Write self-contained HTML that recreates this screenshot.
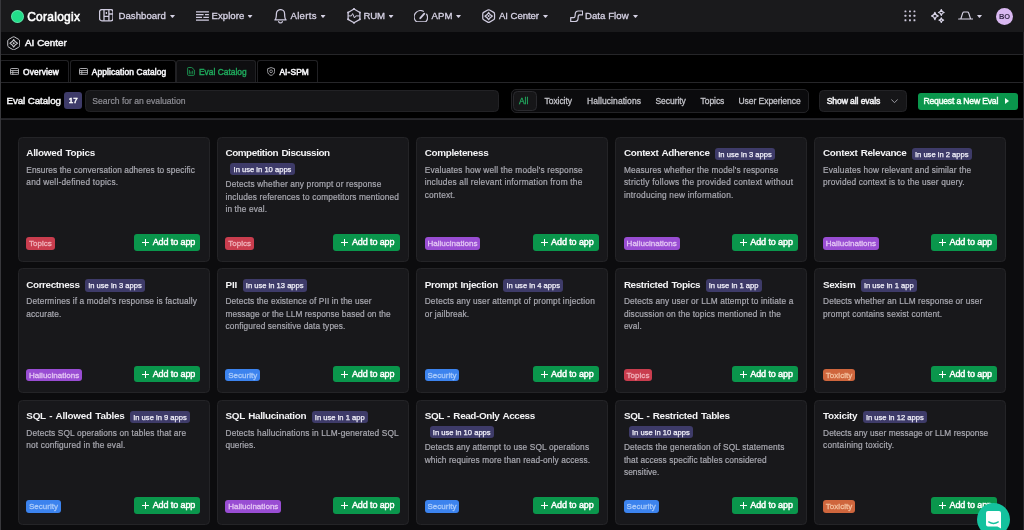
<!DOCTYPE html>
<html lang="en">
<head>
<meta charset="utf-8">
<title>Coralogix - AI Center - Eval Catalog</title>
<style>
*{box-sizing:border-box;margin:0;padding:0}
html,body{width:1024px;height:530px;overflow:hidden;background:#0d0d0f;color:#fff;
  font-family:"Liberation Sans",sans-serif;-webkit-font-smoothing:antialiased}
body{position:relative}
#nav,#sub,#tabs,#bar,#cards,#chat{will-change:transform}
/* top nav */
#nav{position:absolute;left:0;top:0;width:1024px;height:32px;background:#1a1a1c}
#nav .t{position:absolute;top:8.700px;height:14px;line-height:14px;font-size:9.600px;color:#d6d2e4;white-space:nowrap;letter-spacing:0.05px;-webkit-text-stroke:0.3px #d6d2e4}
#nav svg{position:absolute}
#nav .car{position:absolute;top:14.800px;width:5px;height:3px;background:#d6d2e4;clip-path:polygon(0 8%,8% 0,92% 0,100% 8%,58% 100%,42% 100%)}
#logo{position:absolute;left:11px;top:9.5px;width:13px;height:13px;border-radius:50%;background:#22dd8a;box-shadow:inset 0 0 0 1px rgba(255,255,255,.28)}
#brand{position:absolute;left:27.200px;top:8.700px;height:16px;line-height:16px;font-size:12px;font-weight:normal;color:#fff;letter-spacing:0.26px;-webkit-text-stroke:0.55px #fff}
#avatar{position:absolute;left:996px;top:7.5px;width:17px;height:17px;border-radius:50%;background:#d9b8f1;color:#3a2d4d;font-size:7.500px;font-weight:bold;text-align:center;line-height:17.500px;letter-spacing:-0.2px}
/* sub header */
#sub{position:absolute;left:0;top:32px;width:1024px;height:23px;background:#0a0a0c;border-bottom:1px solid #262629}
#sub .t{position:absolute;left:25px;top:4.2px;height:14px;line-height:14px;font-size:9.8px;color:#f0f0f3;letter-spacing:0.05px;-webkit-text-stroke:0.55px #f0f0f3;white-space:nowrap}
#sub svg{position:absolute}
/* tabs */
#tabs{position:absolute;left:0;top:55px;width:1024px;height:28px;background:#000;border-bottom:1px solid #262629}
.tab{position:absolute;top:5px;height:22px;border:1px solid #212124;border-bottom:none;border-radius:3px 3px 0 0;background:#000}
.tab .t{position:absolute;top:3.800px;height:14px;line-height:14px;font-size:8.4px;color:#f2f2f5;white-space:nowrap;letter-spacing:0.12px;-webkit-text-stroke:0.55px #f2f2f5}
.tab svg{position:absolute}
.tab.on{background:#0e0e10}
.tab.on .t{color:#1faa5c;-webkit-text-stroke:0.4px #1faa5c}
/* toolbar */
#bar{position:absolute;left:0;top:83px;width:1024px;height:37px;background:#000;border-bottom:1px solid #27272b}
#bar:after{content:"";position:absolute;left:0;top:35px;width:1024px;height:1px;background:#222226}
#bar .ttl{position:absolute;left:6.5px;top:10.800px;height:14px;line-height:14px;font-size:9.800px;color:#f4f4f6;letter-spacing:-0.1px;white-space:nowrap;-webkit-text-stroke:0.45px #f4f4f6}
#cnt{position:absolute;left:64.300px;top:9.300px;width:17.700px;height:17.200px;border-radius:3px;background:#3e3b69;color:#fff;font-size:8px;text-align:center;line-height:17.200px;letter-spacing:0;-webkit-text-stroke:0.5px #fff}
#search{position:absolute;left:84.500px;top:7px;width:414.300px;height:21.700px;border-radius:4.500px;background:#161618;border:1px solid #222225}
#search span{position:absolute;left:6.800px;top:4.200px;height:13px;line-height:13px;font-size:8.600px;color:#8f8f96;letter-spacing:0;white-space:nowrap;-webkit-text-stroke:0.2px #8f8f96}
#filters{position:absolute;left:510.500px;top:6px;width:298px;height:23.500px;border-radius:5px;background:#0b0b0d;border:1px solid #232326}
#filters .f{position:absolute;top:4.700px;height:13px;line-height:13px;font-size:8.500px;color:#c2c2c8;white-space:nowrap;letter-spacing:-0.05px;-webkit-text-stroke:0.3px #c2c2c8}
#fall{position:absolute;left:1.500px;top:1px;width:23.500px;height:19.500px;border-radius:4.500px;background:#161618;border:1px solid #2a2a2e}
#fall span{position:absolute;left:5px;top:2.700px;height:13px;line-height:13px;font-size:8.500px;color:#22a85e;letter-spacing:-0.05px;-webkit-text-stroke:0.3px #22a85e}
#dd{position:absolute;left:819.200px;top:7px;width:87.500px;height:21.500px;border-radius:4.500px;background:#161618;border:1px solid #232326}
#dd span{position:absolute;left:6.500px;top:3.900px;height:13px;line-height:13px;font-size:8.600px;color:#f0f0f3;letter-spacing:-0.1px;white-space:nowrap;-webkit-text-stroke:0.5px #f0f0f3}
#dd svg{position:absolute;left:70.500px;top:8px}
#req{position:absolute;left:917.700px;top:9.600px;width:100.300px;height:17.200px;border-radius:3px;background:#0a964c}
#req span{position:absolute;left:5.700px;top:2.500px;height:13px;line-height:13px;font-size:8.600px;color:#f2fff6;letter-spacing:-0.17px;white-space:nowrap;-webkit-text-stroke:0.5px #f2fff6}
#req i{position:absolute;left:87.300px;top:5.500px;width:0;height:0;border-top:3.100px solid transparent;border-bottom:3.100px solid transparent;border-left:4.200px solid #f2fff6}
/* content */
#content{position:absolute;left:0;top:120px;width:1024px;height:410px;background:#0c0c0e}
#edgeL{position:absolute;left:0;top:0;width:1px;height:530px;background:#38383c}
#edgeR{position:absolute;left:1023px;top:32px;width:1px;height:498px;background:#242428}
.card{position:absolute;width:192px;height:124.700px;border-radius:4.500px;background:#18181b;border:1px solid #242427}
.card .hd{position:absolute;left:7.800px;top:7.300px;width:176px;display:flex;flex-wrap:wrap;align-items:flex-start}
.card h3{height:15px;line-height:15px;font-size:9.900px;font-weight:bold;color:#f4f4f6;white-space:nowrap;letter-spacing:-0.3px;word-spacing:1px}
.card .bdg{height:12.800px;line-height:13.200px;margin-left:5.500px;margin-top:2.300px;padding:0 3.100px;border-radius:3px;background:#3e3b69;color:#f3f2fb;font-size:7.600px;white-space:nowrap;letter-spacing:0;-webkit-text-stroke:0.25px #f3f2fb}
.card.w .hd{width:150px}
.card.w .bdg{margin-left:5px;margin-top:2.300px}
.card p{position:absolute;left:7.800px;top:25.600px;font-size:8.300px;line-height:12.500px;color:#a9a9b1;white-space:nowrap;letter-spacing:0.09px;-webkit-text-stroke:0.2px #a9a9b1}
.card.w p{top:40.400px}
.card p span{display:block}
.tag{position:absolute;left:7.700px;top:99.400px;height:12.600px;line-height:13.400px;padding:0 2.800px;border-radius:3px;font-size:8px;white-space:nowrap;letter-spacing:0.03px;-webkit-text-stroke:0.3px}
.tag.tp{background:#c93d4e;color:#f0b1ba}
.tag.hl{background:#994dd3;color:#e3c4f4}
.tag.sc{background:#3c83ee;color:#a9cafa}
.tag.tx{background:#cf663d;color:#f4c2a0}
.add{position:absolute;left:115.700px;top:96.200px;width:66.200px;height:16.800px;border-radius:3px;background:#0a964c;color:#fff;font-size:9px;font-weight:normal;white-space:nowrap;letter-spacing:-0.1px;line-height:16.500px;-webkit-text-stroke:0.45px #fff}
.add span{position:absolute;left:18.500px;top:0.200px}
.add i{position:absolute;left:8px;top:5px;width:7px;height:7px}
.add i:before{content:"";position:absolute;left:3px;top:0;width:1px;height:7px;background:#fff}
.add i:after{content:"";position:absolute;left:0;top:3px;width:7px;height:1px;background:#fff}
#chat{position:absolute;left:976.800px;top:503px;width:33.400px;height:33.400px;border-radius:50%;background:#14c29e}
#chat svg{position:absolute;left:9px;top:8px}
</style>
</head>
<body>
<div id="content"></div>
<div id="nav">
  <div id="logo"></div><div id="brand">Coralogix</div>
  <div class="t" style="left:118.5px">Dashboard</div><div class="car" style="left:170px"></div>
  <div class="t" style="left:211.5px">Explore</div><div class="car" style="left:247.5px"></div>
  <div class="t" style="left:290.5px;letter-spacing:0.28px">Alerts</div><div class="car" style="left:320.5px"></div>
  <div class="t" style="left:363.5px;letter-spacing:-0.2px">RUM</div><div class="car" style="left:388.5px"></div>
  <div class="t" style="left:431.5px">APM</div><div class="car" style="left:456px"></div>
  <div class="t" style="left:499px;letter-spacing:-0.07px">AI Center</div><div class="car" style="left:543px"></div>
  <div class="t" style="left:585px">Data Flow</div><div class="car" style="left:633px"></div>
  <div class="car" style="left:977px"></div>

  <svg style="left:98.6px;top:9.4px" width="14.6" height="12.4" viewBox="0 0 14.6 12.4" fill="none" stroke="#cfcbdf" stroke-width="1.300"><rect x=".6" y=".6" width="13.4" height="11.2" rx="2.2"/><path d="M5 .6v11.2M9.9 .6v11.2M5 7.4h4.9M9.9 5h4.1M7.4 3v2"/></svg>
  <svg style="left:196.2px;top:11px" width="12.9" height="10" viewBox="0 0 12.9 10" fill="none" stroke="#cfcbdf" stroke-width="1.250"><path d="M0 .8h12.9M0 3.6h7.6M9 3.6h3.9M0 6.4h6M7.4 6.4h5.5M0 9.2h12.9"/></svg>
  <svg style="left:274px;top:8.600px" width="13" height="15" viewBox="0 0 13 15" fill="none" stroke="#cfcbdf" stroke-width="1.250" stroke-linejoin="round" stroke-linecap="round"><path d="M.9 10.900c1.300-1 1.500-2.800 1.500-6.200a4.100 4.100 0 0 1 8.200 0c0 3.400.2 5.200 1.500 6.200z"/><path d="M4.700 12.700a1.900 1.900 0 0 0 3.600 0"/></svg>
  <svg style="left:346.7px;top:8.2px" width="14" height="15.800" viewBox="0 0 14 15.800" fill="none" stroke="#cfcbdf" stroke-width="1.250" stroke-linejoin="round"><path d="M7 1l5.900 3.450v6.900L7 14.800 1.100 11.350v-6.900z"/><path d="M1.100 7.900h3.300l1.200-2.300 1.900 4.400 1.200-2.100h4.200" stroke-width="1"/><g fill="#cfcbdf" stroke="none"><circle cx="7" cy="1" r="1"/><circle cx="7" cy="14.800" r="1"/><circle cx="1.100" cy="4.450" r="1"/><circle cx="12.900" cy="4.450" r="1"/><circle cx="1.100" cy="11.350" r="1"/><circle cx="12.900" cy="11.350" r="1"/></g></svg>
  <svg style="left:414.300px;top:9.800px" width="14.200" height="12.600" viewBox="0 0 14.200 12.600" fill="none" stroke="#cfcbdf" stroke-width="1.250" stroke-linecap="round" stroke-linejoin="round"><path d="M9.400 1.300A6.300 6.300 0 0 0 1.900 11.200a1.300 1.300 0 0 0 1 .6h8.400a1.300 1.300 0 0 0 1-.6A6.300 6.300 0 0 0 12.600 4.200"/><path d="M6.300 8.200L10.300 3.700" stroke-width="1.900"/></svg>
  <svg style="left:482.400px;top:8.900px" width="13.300" height="14.200" viewBox="0 0 13.300 14.200" fill="none" stroke="#cfcbdf" stroke-width="1.250" stroke-linejoin="round"><path d="M5.750 1.050a1.800 1.800 0 0 1 1.800 0l4.100 2.350a1.800 1.800 0 0 1 .9 1.550v4.300a1.800 1.800 0 0 1-.9 1.550l-4.100 2.350a1.800 1.800 0 0 1-1.800 0l-4.100-2.350a1.800 1.800 0 0 1-.9-1.550v-4.300a1.800 1.800 0 0 1 .9-1.550z"/><path d="M6.650 3.400q1.200 2.500 3.700 3.700q-2.500 1.200-3.700 3.700q-1.200-2.500-3.700-3.700q2.500-1.200 3.700-3.700z" stroke-width="1.200"/><circle cx="6.650" cy="7.100" r="1" fill="#cfcbdf" stroke="none"/></svg>
  <svg style="left:569.600px;top:9.600px" width="13.300" height="12.300" viewBox="0 0 13.300 12.300" fill="none" stroke="#cfcbdf" stroke-width="1.250" stroke-linejoin="round"><path d="M.7 11.600V7.700h3.100c1.200 0 1.400-1.300 1.400-3.100C5.200 2.300 6.400 1 8.500 1h4.100v3.900H9.500c-1.200 0-1.400 1.300-1.400 3.100 0 2.300-1.200 3.600-3.300 3.600z" stroke-width="1.200"/></svg>
  <svg style="left:904px;top:10.400px" width="12.200" height="11.800" viewBox="0 0 12.200 11.800" fill="#cdc9dc"><rect x=".5" y=".4" width="1.900" height="1.900" rx=".5"/><rect x="5" y=".4" width="1.900" height="1.900" rx=".5"/><rect x="9.500" y=".4" width="1.900" height="1.900" rx=".5"/><rect x=".5" y="4.850" width="1.900" height="1.900" rx=".5"/><rect x="5" y="4.850" width="1.900" height="1.900" rx=".5"/><rect x="9.500" y="4.850" width="1.900" height="1.900" rx=".5"/><rect x=".5" y="9.300" width="1.900" height="1.900" rx=".5"/><rect x="5" y="9.300" width="1.900" height="1.900" rx=".5"/><rect x="9.500" y="9.300" width="1.900" height="1.900" rx=".5"/></svg>
  <svg style="left:930.800px;top:9px" width="13.800" height="14" viewBox="0 0 13.800 14" fill="none" stroke="#d9d5e8" stroke-width="1.250" stroke-linejoin="round"><path d="M3.900 3.400q.55 3.050 3.500 3.600q-2.950.55-3.500 3.600q-.55-3.050-3.500-3.600q2.950-.55 3.500-3.600z"/><path d="M10.300.6q.45 2.450 2.900 2.900q-2.450.45-2.900 2.900q-.45-2.450-2.900-2.900q2.450-.45 2.900-2.900z"/><path d="M10.300 8.900q.35 1.950 2.300 2.300q-1.950.35-2.300 2.300q-.35-1.950-2.300-2.300q1.950-.35 2.300-2.300z"/></svg>
  <svg style="left:957.800px;top:11.200px" width="15.400" height="8.800" viewBox="0 0 15.400 8.800" fill="none" stroke="#d9d5e8" stroke-width="1.100" stroke-linecap="round" stroke-linejoin="round"><path d="M.6 8h14.200M2.800 8L4.700 2c.2-.7.600-1 1.300-1h3.400c.7 0 1.100.3 1.300 1L12.600 8"/></svg>
  <div id="avatar">BO</div>
</div>
<div id="sub"><svg style="left:6.800px;top:3.900px" width="13.400" height="14.600" viewBox="0 0 13.400 14.600" fill="none" stroke="#c6c6cb" stroke-width="1" stroke-linejoin="round"><path d="M5.800 1.050a1.800 1.800 0 0 1 1.800 0l4.150 2.400a1.800 1.800 0 0 1 .9 1.550v4.600a1.800 1.800 0 0 1-.9 1.550l-4.150 2.400a1.800 1.800 0 0 1-1.800 0l-4.150-2.400a1.800 1.800 0 0 1-.9-1.550v-4.600a1.800 1.800 0 0 1 .9-1.550z"/><path d="M6.700 3.500q1.200 2.600 3.800 3.800q-2.600 1.200-3.800 3.800q-1.200-2.600-3.800-3.800q2.600-1.200 3.800-3.800z" stroke-width="1.100"/><circle cx="6.700" cy="7.300" r="1" fill="#c6c6cb" stroke="none"/></svg><div class="t">AI Center</div></div>
<div id="tabs">
  <div class="tab" style="left:-1px;width:69.500px"><svg style="left:10.2px;top:7.100px" width="9" height="7.200" viewBox="0 0 9 7.200" fill="none" stroke="#bdbdc2" stroke-width=".9"><rect x=".5" y=".5" width="8" height="6.200" rx=".8"/><path d="M.5 2.600h8M.5 4.650h8M2.800 2.600v4.100"/></svg><div class="t" style="left:23px">Overview</div></div>
  <div class="tab" style="left:69.500px;width:106px"><svg style="left:8.3px;top:7.100px" width="9" height="7.200" viewBox="0 0 9 7.200" fill="none" stroke="#bdbdc2" stroke-width=".9"><rect x=".5" y=".5" width="8" height="6.200" rx=".8"/><path d="M.5 2.600h8M.5 4.650h8M2.800 2.600v4.100"/></svg><div class="t" style="left:21.300px">Application Catalog</div></div>
  <div class="tab on" style="left:176.300px;width:79.500px"><svg style="left:9.900px;top:5.900px" width="7.800" height="8.800" viewBox="0 0 8.400 9.400" preserveAspectRatio="none" fill="none" stroke="#1faa5c" stroke-width=".9" stroke-linejoin="round"><path d="M1.500.5h3.600l2.800 2.600v5c0 .5-.3.800-.8.800H1.500c-.5 0-.8-.3-.8-.8V1.300c0-.5.300-.8.800-.8z"/><path d="M2.600 3.300v4M4.200 4.800v2.500M5.800 4v3.300" stroke-width=".8"/></svg><div class="t" style="left:21.700px;letter-spacing:0.02px">Eval Catalog</div></div>
  <div class="tab" style="left:256.900px;width:61px"><svg style="left:9.100px;top:5.900px" width="8.200" height="9" viewBox="0 0 9 9.800" preserveAspectRatio="none" fill="none" stroke="#bdbdc2" stroke-width=".9" stroke-linejoin="round"><path d="M4.500.6l3.800 1.300v3c0 2.100-1.500 3.600-3.800 4.300C2.200 8.500.7 7 .7 4.900v-3z"/><circle cx="4.500" cy="4.700" r="1.500" stroke-width=".8"/></svg><div class="t" style="left:21.500px">AI-SPM</div></div>
</div>
<div id="bar">
  <div class="ttl">Eval Catalog</div><div id="cnt">17</div>
  <div id="search"><span>Search for an evaluation</span></div>
  <div id="filters">
    <div id="fall"><span>All</span></div>
    <div class="f" style="left:33px">Toxicity</div>
    <div class="f" style="left:75.500px;letter-spacing:0.08px">Hallucinations</div>
    <div class="f" style="left:144px">Security</div>
    <div class="f" style="left:189px">Topics</div>
    <div class="f" style="left:227px">User Experience</div>
  </div>
  <div id="dd"><span>Show all evals</span><svg width="7" height="4.500" viewBox="0 0 7 4.500" fill="none" stroke="#9a9aa0" stroke-width="1" stroke-linecap="round" stroke-linejoin="round"><path d="M.6.700l2.900 3 2.900-3"/></svg></div>
  <div id="req"><span>Request a New Eval</span><i></i></div>
</div>
<div id="edgeL"></div><div id="edgeR"></div>
<div id="cards">
<div class="card" style="left:17.5px;top:137px"><div class="hd"><h3 style="letter-spacing:-0.29px">Allowed Topics</h3></div><p><span style="letter-spacing:0.08px">Ensures the conversation adheres to specific</span><span style="letter-spacing:0.22px">and well-defined topics.</span></p><span class="tag tp">Topics</span><div class="add"><i></i><span>Add to app</span></div></div>
<div class="card w" style="left:216.7px;top:137px"><div class="hd"><h3 style="letter-spacing:-0.45px">Competition Discussion</h3><span class="bdg">In use in 10 apps</span></div><p><span style="letter-spacing:0.16px">Detects whether any prompt or response</span><span style="letter-spacing:0.14px">includes references to competitors mentioned</span><span style="letter-spacing:0.12px">in the eval.</span></p><span class="tag tp">Topics</span><div class="add"><i></i><span>Add to app</span></div></div>
<div class="card" style="left:415.9px;top:137px"><div class="hd"><h3 style="letter-spacing:-0.32px">Completeness</h3></div><p><span style="letter-spacing:0.17px">Evaluates how well the model&#39;s response</span><span style="letter-spacing:0.21px">includes all relevant information from the</span><span style="letter-spacing:0.19px">context.</span></p><span class="tag hl">Hallucinations</span><div class="add"><i></i><span>Add to app</span></div></div>
<div class="card" style="left:615.1px;top:137px"><div class="hd"><h3 style="letter-spacing:-0.32px">Context Adherence</h3><span class="bdg">In use in 3 apps</span></div><p><span style="letter-spacing:0.15px">Measures whether the model&#39;s response</span><span style="letter-spacing:0.28px">strictly follows the provided context without</span><span style="letter-spacing:0.21px">introducing new information.</span></p><span class="tag hl">Hallucinations</span><div class="add"><i></i><span>Add to app</span></div></div>
<div class="card" style="left:814.3px;top:137px"><div class="hd"><h3 style="letter-spacing:-0.36px">Context Relevance</h3><span class="bdg">In use in 2 apps</span></div><p><span style="letter-spacing:0.16px">Evaluates how relevant and similar the</span><span style="letter-spacing:0.16px">provided context is to the user query.</span></p><span class="tag hl">Hallucinations</span><div class="add"><i></i><span>Add to app</span></div></div>
<div class="card" style="left:17.5px;top:268.45px"><div class="hd"><h3 style="letter-spacing:-0.40px">Correctness</h3><span class="bdg">In use in 3 apps</span></div><p><span style="letter-spacing:0.15px">Determines if a model&#39;s response is factually</span><span style="letter-spacing:0.11px">accurate.</span></p><span class="tag hl">Hallucinations</span><div class="add"><i></i><span>Add to app</span></div></div>
<div class="card" style="left:216.7px;top:268.45px"><div class="hd"><h3 style="letter-spacing:-0.13px">PII</h3><span class="bdg">In use in 13 apps</span></div><p><span style="letter-spacing:0.10px">Detects the existence of PII in the user</span><span style="letter-spacing:0.07px">message or the LLM response based on the</span><span style="letter-spacing:0.12px">configured sensitive data types.</span></p><span class="tag sc">Security</span><div class="add"><i></i><span>Add to app</span></div></div>
<div class="card" style="left:415.9px;top:268.45px"><div class="hd"><h3 style="letter-spacing:-0.36px">Prompt Injection</h3><span class="bdg">In use in 4 apps</span></div><p><span style="letter-spacing:0.18px">Detects any user attempt of prompt injection</span><span style="letter-spacing:0.13px">or jailbreak.</span></p><span class="tag sc">Security</span><div class="add"><i></i><span>Add to app</span></div></div>
<div class="card" style="left:615.1px;top:268.45px"><div class="hd"><h3 style="letter-spacing:-0.41px">Restricted Topics</h3><span class="bdg">In use in 1 app</span></div><p><span style="letter-spacing:0.15px">Detects any user or LLM attempt to initiate a</span><span style="letter-spacing:0.13px">discussion on the topics mentioned in the</span><span style="letter-spacing:0.11px">eval.</span></p><span class="tag tp">Topics</span><div class="add"><i></i><span>Add to app</span></div></div>
<div class="card" style="left:814.3px;top:268.45px"><div class="hd"><h3 style="letter-spacing:-0.40px">Sexism</h3><span class="bdg">In use in 1 app</span></div><p><span style="letter-spacing:0.12px">Detects whether an LLM response or user</span><span style="letter-spacing:0.15px">prompt contains sexist content.</span></p><span class="tag tx">Toxicity</span><div class="add"><i></i><span>Add to app</span></div></div>
<div class="card" style="left:17.5px;top:400.05px"><div class="hd"><h3 style="letter-spacing:-0.22px">SQL - Allowed Tables</h3><span class="bdg">In use in 9 apps</span></div><p><span style="letter-spacing:0.14px">Detects SQL operations on tables that are</span><span style="letter-spacing:0.15px">not configured in the eval.</span></p><span class="tag sc">Security</span><div class="add"><i></i><span>Add to app</span></div></div>
<div class="card" style="left:216.7px;top:400.05px"><div class="hd"><h3 style="letter-spacing:-0.30px">SQL Hallucination</h3><span class="bdg">In use in 1 app</span></div><p><span style="letter-spacing:0.15px">Detects hallucinations in LLM-generated SQL</span><span style="letter-spacing:0.07px">queries.</span></p><span class="tag hl">Hallucinations</span><div class="add"><i></i><span>Add to app</span></div></div>
<div class="card w" style="left:415.9px;top:400.05px"><div class="hd"><h3 style="letter-spacing:-0.37px">SQL - Read-Only Access</h3><span class="bdg">In use in 10 apps</span></div><p><span style="letter-spacing:0.15px">Detects any attempt to use SQL operations</span><span style="letter-spacing:0.12px">which requires more than read-only access.</span></p><span class="tag sc">Security</span><div class="add"><i></i><span>Add to app</span></div></div>
<div class="card w" style="left:615.1px;top:400.05px"><div class="hd"><h3 style="letter-spacing:-0.34px">SQL - Restricted Tables</h3><span class="bdg">In use in 10 apps</span></div><p><span style="letter-spacing:0.16px">Detects the generation of SQL statements</span><span style="letter-spacing:0.09px">that access specific tables considered</span><span style="letter-spacing:0.10px">sensitive.</span></p><span class="tag sc">Security</span><div class="add"><i></i><span>Add to app</span></div></div>
<div class="card" style="left:814.3px;top:400.05px"><div class="hd"><h3 style="letter-spacing:-0.30px">Toxicity</h3><span class="bdg">In use in 12 apps</span></div><p><span style="letter-spacing:0.06px">Detects any user message or LLM response</span><span style="letter-spacing:0.20px">containing toxicity.</span></p><span class="tag tx">Toxicity</span><div class="add"><i></i><span>Add to app</span></div></div>
</div>
<div id="chat"><svg width="15" height="17.500" viewBox="0 0 15 17.500"><path d="M2 0h11a2 2 0 0 1 2 2v15.500l-3.600-2H2a2 2 0 0 1-2-2V2a2 2 0 0 1 2-2z" fill="#fff"/><path d="M2.700 10.900q4.800 3.200 9.600 0" fill="none" stroke="#14c29e" stroke-width="1.300" stroke-linecap="round"/></svg></div>
</body>
</html>
